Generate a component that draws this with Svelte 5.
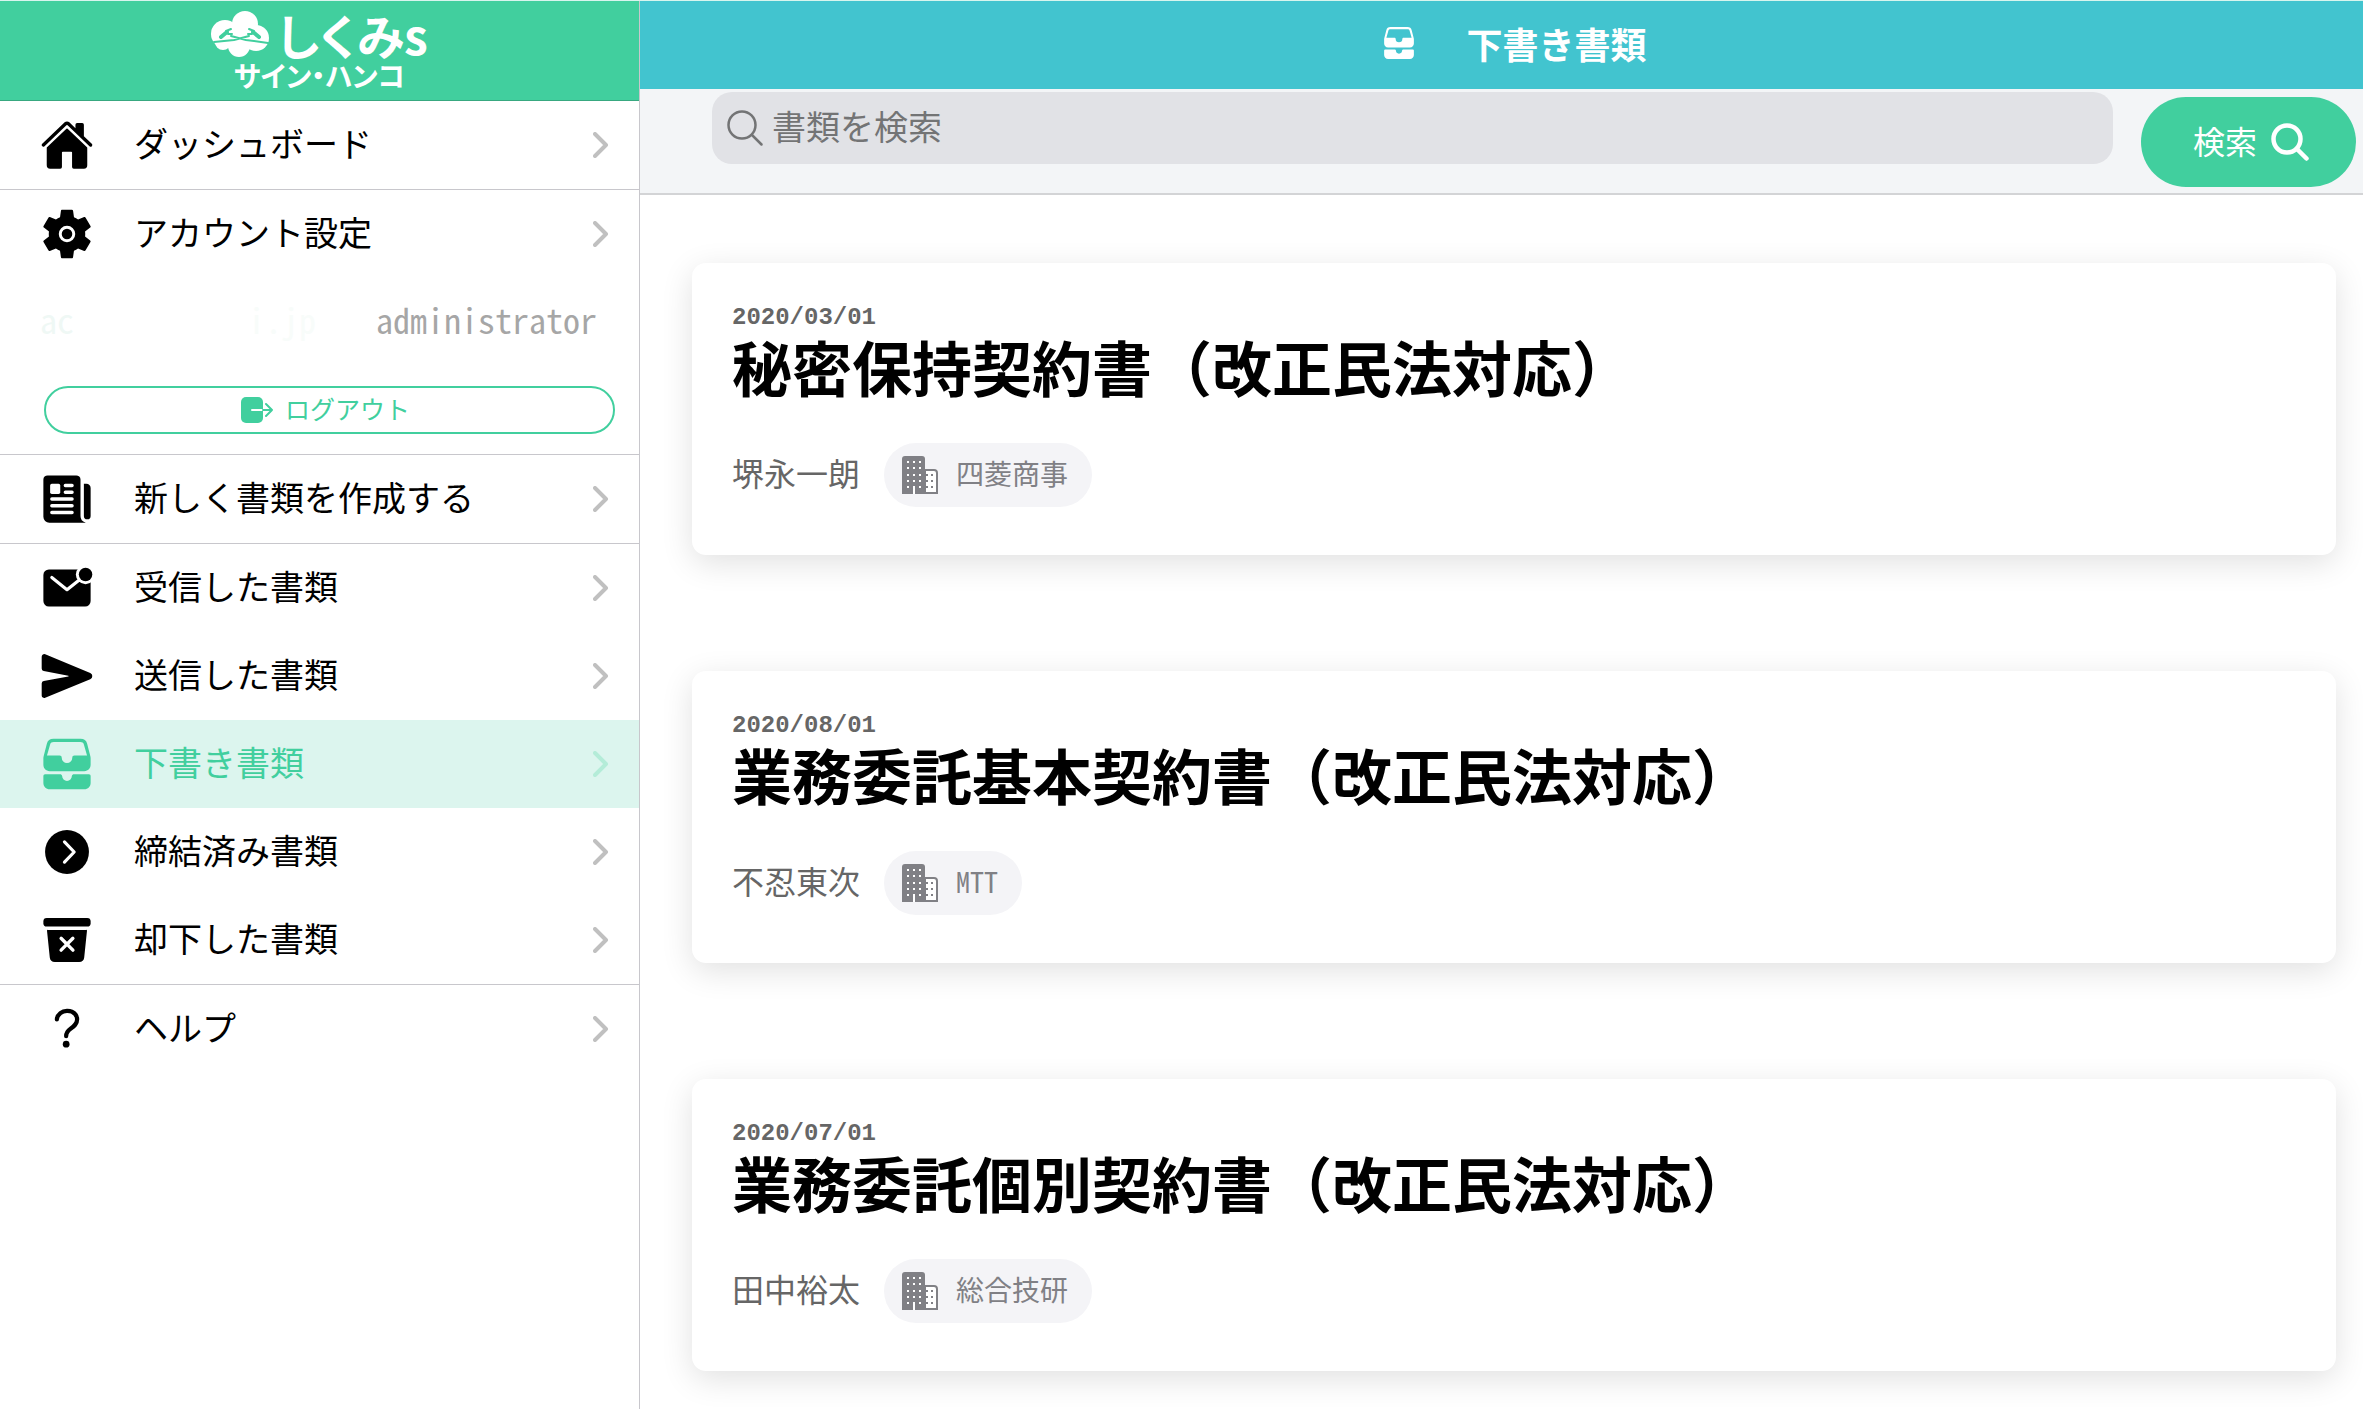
<script>
	const groups = [
		[{ icon: 'home', label: 'ダッシュボード' }],
		[{ icon: 'settings', label: 'アカウント設定', account: true }],
		[{ icon: 'newspaper', label: '新しく書類を作成する' }],
		[
			{ icon: 'mail', label: '受信した書類' },
			{ icon: 'send', label: '送信した書類' },
			{ icon: 'tray', label: '下書き書類', active: true },
			{ icon: 'forward', label: '締結済み書類' },
			{ icon: 'bin', label: '却下した書類' }
		],
		[{ icon: 'help', label: 'ヘルプ' }]
	];

	const documents = [
		{ date: '2020/03/01', title: '秘密保持契約書（改正民法対応）', name: '堺永一朗', company: '四菱商事' },
		{ date: '2020/08/01', title: '業務委託基本契約書（改正民法対応）', name: '不忍東次', company: 'MTT' },
		{ date: '2020/07/01', title: '業務委託個別契約書（改正民法対応）', name: '田中裕太', company: '総合技研' }
	];

	let keyword = $state('');
</script>

{#snippet icon(name)}
	<svg class="icon" viewBox="0 0 512 512" fill="currentColor" aria-hidden="true">
		{#if name === 'home'}
			<path d="M261.56 101.28a8 8 0 00-11.06 0L66.4 277.15a8 8 0 00-2.47 5.79L63.9 448a32 32 0 0032 32H192a16 16 0 0016-16V328a8 8 0 018-8h80a8 8 0 018 8v136a16 16 0 0016 16h96.06a32 32 0 0032-32V282.94a8 8 0 00-2.47-5.79z" />
			<path d="M490.91 244.15l-74.8-71.56V64a16 16 0 00-16-16h-48a16 16 0 00-16 16v32l-57.92-55.38C272.77 35.14 264.71 32 256 32c-8.68 0-16.72 3.14-22.14 8.63l-212.7 203.5c-6.22 6-7 15.87-1.34 22.37A16 16 0 0043 267.56L250.5 69.28a8 8 0 0111.06 0l207.52 198.28a16 16 0 0022.59-.44c6.14-6.36 5.63-16.86-.76-22.97z" />
		{:else if name === 'settings'}
			<path transform="translate(-32 -32) scale(24)" d="M19.14 12.94c.04-.3.06-.61.06-.94 0-.32-.02-.64-.07-.94l2.03-1.58a.49.49 0 00.12-.61l-1.92-3.32a.488.488 0 00-.59-.22l-2.39.96c-.5-.38-1.03-.7-1.62-.94l-.36-2.54a.484.484 0 00-.48-.41h-3.84c-.24 0-.43.17-.47.41l-.36 2.54c-.59.24-1.13.57-1.62.94l-2.39-.96c-.22-.08-.47 0-.59.22L2.74 8.87c-.12.21-.08.47.12.61l2.03 1.58c-.05.3-.09.63-.09.94s.02.64.07.94l-2.03 1.58a.49.49 0 00-.12.61l1.92 3.32c.12.22.37.29.59.22l2.39-.96c.5.38 1.03.7 1.62.94l.36 2.54c.05.24.24.41.48.41h3.84c.24 0 .44-.17.47-.41l.36-2.54c.59-.24 1.13-.56 1.62-.94l2.39.96c.22.08.47 0 .59-.22l1.92-3.32c.12-.22.07-.47-.12-.61l-2.01-1.58z" />
			<circle cx="256" cy="256" r="64" fill="none" stroke="#fff" stroke-width="28" />
		{:else if name === 'newspaper'}
			<path d="M439.91 112h-23.82a.09.09 0 00-.09.09V416a32 32 0 0064 0V152.09A40.09 40.09 0 00439.91 112z" />
			<path d="M384 416V72a40 40 0 00-40-40H72a40 40 0 00-40 40v352a56 56 0 0056 56h342.85a1.14 1.14 0 00.3-2.25A64.11 64.11 0 01384 416z" />
			<rect x="96" y="112" width="96" height="96" rx="16" fill="#fff" />
			<path d="M240 128h64M240 192h64M112 256h192M112 320h192M112 384h192" stroke="#fff" stroke-width="32" stroke-linecap="round" />
		{:else if name === 'mail'}
			<rect x="32" y="80" width="448" height="352" rx="52" />
			<path d="M112 156l144 116 110-88" fill="none" stroke="#fff" stroke-width="30" stroke-linecap="round" stroke-linejoin="round" />
			<circle cx="432" cy="128" r="92" fill="#fff" />
			<circle cx="432" cy="128" r="64" />
		{:else if name === 'send'}
			<path d="M476.59 227.05l-.16-.07L49.35 49.84A23.56 23.56 0 0027.14 52 24.65 24.65 0 0016 72.59v113.29a24 24 0 0019.52 23.57l232.93 43.07a4 4 0 010 7.86L35.53 303.45A24 24 0 0016 327v113.31A23.57 23.57 0 0026.59 460a23.94 23.94 0 0013.22 4 24.55 24.55 0 009.52-1.93L476.4 285.94l.19-.09a32 32 0 000-58.8z" />
		{:else if name === 'tray'}
			<path fill-rule="evenodd" d="M128 16h256c34 0 56 16 63 48l31 120q2 8 2 18v62c0 34-24 60-60 60H92c-36 0-60-26-60-60v-62q0-10 2-18L65 64c7-32 29-48 63-48zM130 48c-18 0-30 6-34 24L66 176h120c12 0 20 8 20 20a50 50 0 00100 0c0-12 8-20 20-20h120L416 72c-4-18-16-24-34-24z" />
			<path d="M48 352h140c12 0 20 6 22 18a46 46 0 0092 0c2-12 10-18 22-18h140q16 0 16 16v68c0 34-26 60-60 60H92c-34 0-60-26-60-60v-68q0-16 16-16z" />
		{:else if name === 'forward'}
			<circle cx="256" cy="256" r="208" />
			<path d="M232 160l92 96-92 96" fill="none" stroke="#fff" stroke-width="30" stroke-linecap="round" stroke-linejoin="round" />
		{:else if name === 'bin'}
			<rect x="32" y="48" width="448" height="80" rx="32" />
			<path d="M74.45 160a8 8 0 00-8 8.83l26.31 252.56a1.5 1.5 0 000 .22A48 48 0 00140.45 464h231.09a48 48 0 0047.67-42.39v-.21l26.27-252.57a8 8 0 00-8-8.83zm248.86 180.69a16 16 0 11-22.63 22.62L256 318.63l-44.69 44.68a16 16 0 01-22.63-22.62L233.37 296l-44.69-44.69a16 16 0 0122.63-22.62L256 273.37l44.68-44.68a16 16 0 0122.63 22.62L278.62 296z" />
		{:else if name === 'help'}
			<path d="M160 164s1.44-33 33.54-59.46C212.6 88.83 235.49 84.28 256 84c18.73-.23 35.47 2.94 45.48 7.82C318.59 100.2 352 120.6 352 164c0 45.67-29.18 66.37-62.35 89.18S248 298.36 248 324" fill="none" stroke="currentColor" stroke-width="40" stroke-linecap="round" />
			<circle cx="248" cy="400" r="32" />
		{/if}
	</svg>
{/snippet}

{#snippet magnifier(width)}
	<svg class="magnifier" viewBox="0 0 38 38" fill="none" stroke="currentColor" stroke-width={width} stroke-linecap="round" aria-hidden="true">
		<circle cx="16" cy="16" r="13.5" />
		<path d="M26 26l9.5 9.5" />
	</svg>
{/snippet}

<div class="page">
	<aside>
		<header class="brand">
			<div class="brand-row">
				<svg class="brand-mark" viewBox="0 0 58 46" aria-hidden="true">
					<g fill="#fff">
						<circle cx="34" cy="13" r="13" />
						<circle cx="14" cy="23" r="14" />
						<circle cx="12" cy="31" r="8" />
						<circle cx="45" cy="27" r="13" />
						<circle cx="28" cy="35" r="11" />
						<path d="M14 20h28v14H14z" />
					</g>
					<g fill="none" stroke="#41cf9e" stroke-linecap="round" stroke-linejoin="round">
						<path d="M3 31l20-2 15-4M57 32l-22-3-15-4" stroke-width="2" />
						<path d="M10 26l6-5M48 26l-6-5" stroke-width="4" />
						<path d="M15 20l5-2M17 23h4M43 20l-5-2M41 23h-4" stroke-width="2" />
					</g>
				</svg>
				<span class="brand-name">しくみs</span>
			</div>
			<span class="brand-sub">サイン・ハンコ</span>
		</header>

		<nav>
			{#each groups as group}
				<ul>
					{#each group as item}
						<li>
							<a href="#{item.icon}" class="item" class:active={item.active}>
								{@render icon(item.icon)}
								<span class="label">{item.label}</span>
								<svg class="chevron" viewBox="0 0 16 26" aria-hidden="true">
									<path d="M2 2l11 11L2 24" fill="none" stroke="currentColor" stroke-width="4" stroke-linecap="round" stroke-linejoin="round" />
								</svg>
							</a>
							{#if item.account}
								<div class="account">
									<span class="masked">ac</span>
									<span class="masked domain">i.jp</span>
									<span class="role">administrator</span>
								</div>
								<button type="button" class="logout">
									<svg viewBox="0 0 32 26" aria-hidden="true">
										<rect width="22" height="26" rx="5" fill="currentColor" />
										<path d="M11 13h11" stroke="#fff" stroke-width="2" stroke-linecap="round" />
										<path d="M22 13h9M25 7l6 6-6 6" fill="none" stroke="currentColor" stroke-width="2" stroke-linecap="round" stroke-linejoin="round" />
									</svg>
									<span>ログアウト</span>
								</button>
							{/if}
						</li>
					{/each}
				</ul>
			{/each}
		</nav>
	</aside>

	<main>
		<header class="title-bar">
			{@render icon('tray')}
			<h1>下書き書類</h1>
		</header>

		<form class="search" onsubmit={(e) => e.preventDefault()}>
			<label class="search-box">
				{@render magnifier(2.5)}
				<input type="search" placeholder="書類を検索" aria-label="書類を検索" bind:value={keyword} />
			</label>
			<button type="submit">
				<span>検索</span>
				{@render magnifier(4.5)}
			</button>
		</form>

		<div class="cards">
			{#each documents as doc}
				<article>
					<time>{doc.date}</time>
					<h2>{doc.title}</h2>
					<div class="person">
						<span class="name">{doc.name}</span>
						<div class="chip">
							<svg viewBox="0 0 36 38" aria-hidden="true">
								<path d="M3 0h17q3 0 3 3v35H0V3q0-3 3-3z" fill="currentColor" />
								<path d="M23 14h9q3 0 3 3v20H23z" fill="#fff" stroke="currentColor" stroke-width="2" />
								<path d="M5 6h14M5 12h14M5 19h14M5 25h14M5 31h14" stroke="#fff" stroke-width="2" stroke-dasharray="2 4" />
								<path d="M24 19h8M24 25h8M24 31h8" stroke="currentColor" stroke-width="2" stroke-dasharray="2 3" />
								<path d="M11 32h2v6h-2z" fill="#fff" />
							</svg>
							<span>{doc.company}</span>
						</div>
					</div>
				</article>
			{/each}
		</div>
	</main>
</div>

<style>
	:global(body) {
		margin: 0;
		background: #fff;
	}

	.page {
		display: flex;
		min-height: 100vh;
		box-sizing: border-box;
		border-top: 1px solid #d8f5ee;
		font-family: 'Noto Sans CJK JP', sans-serif;
		font-size: 34px;
		color: #000;
	}

	button,
	input {
		font-family: inherit;
	}

	aside {
		flex: 0 0 clamp(270px, 28%, 640px);
		box-sizing: border-box;
		border-right: 1px solid #c8c7cc;
	}

	.brand {
		display: flex;
		flex-direction: column;
		align-items: center;
		box-sizing: border-box;
		height: 100px;
		padding-top: 8px;
		background: #41cf9e;
		border-bottom: 1px solid #38a880;
		color: #fff;
		font-weight: 700;
		font-feature-settings: 'palt';
	}
	.brand-row {
		display: flex;
		align-items: center;
		gap: 8px;
	}
	.brand-mark {
		width: 58px;
		height: 46px;
	}
	.brand-name {
		font-size: 48px;
		line-height: 50px;
	}
	.brand-sub {
		font-size: 28px;
		line-height: 32px;
	}

	ul {
		margin: 0;
		padding: 0;
		list-style: none;
		border-bottom: 1px solid #c8c7cc;
	}
	ul:last-child {
		border-bottom: none;
	}

	.item {
		display: flex;
		align-items: center;
		height: 88px;
		padding: 0 30px 0 40px;
		color: inherit;
		text-decoration: none;
	}
	.item.active {
		background: #dcf5ee;
		color: #41cf9e;
	}
	.icon {
		width: 54px;
		height: 54px;
		flex: none;
	}
	.label {
		flex: 1;
		margin-left: 40px;
		padding-bottom: 4px;
		line-height: 44px;
	}
	.chevron {
		width: 16px;
		height: 26px;
		color: #c0c0c0;
	}
	.active .chevron {
		color: #b4ecd8;
	}

	.account {
		display: flex;
		padding: 0 42px 4px 40px;
		line-height: 84px;
		font-feature-settings: 'hwid';
	}
	.masked {
		color: #eff8f5;
	}
	.domain {
		margin-left: 174px;
		color: #f8fcfa;
	}
	.role {
		margin-left: auto;
		color: #a6a6a6;
	}

	.logout {
		display: flex;
		align-items: center;
		justify-content: center;
		gap: 12px;
		box-sizing: border-box;
		width: calc(100% - 68px);
		height: 48px;
		margin: 20px 24px 20px 44px;
		padding: 0 8px 0 0;
		background: none;
		border: 2px solid #41cf9e;
		border-radius: 24px;
		color: #41cf9e;
		font-size: 25px;
	}
	.logout svg {
		width: 32px;
		height: 26px;
	}
	.logout span {
		padding-bottom: 4px;
	}

	main {
		flex: 1;
		min-width: 0;
	}

	.title-bar {
		display: flex;
		align-items: center;
		justify-content: center;
		gap: 50px;
		box-sizing: border-box;
		height: 88px;
		padding: 0 0 4px 26px;
		background: #42c4cf;
		color: #fff;
	}
	.title-bar .icon {
		width: 34px;
		height: 34px;
	}
	h1 {
		margin: 0;
		font-size: 36px;
		line-height: 44px;
	}

	.search {
		display: flex;
		align-items: flex-start;
		gap: 28px;
		padding: 3px 7px 6px 72px;
		background: #f3f5f7;
		border-bottom: 2px solid #d3d4d6;
	}
	.search-box {
		display: flex;
		flex: 1;
		align-items: center;
		gap: 8px;
		height: 72px;
		padding: 0 14px;
		background: #e1e2e6;
		border-radius: 20px;
		color: #737475;
	}
	.search-box input {
		flex: 1;
		min-width: 0;
		padding: 0 0 6px;
		background: none;
		border: none;
		outline: none;
		color: inherit;
		font-size: 34px;
	}
	.search-box input::placeholder {
		color: inherit;
		opacity: 1;
	}
	.magnifier {
		width: 38px;
		height: 38px;
		flex: none;
	}
	.search button {
		display: flex;
		align-items: center;
		gap: 14px;
		height: 90px;
		margin-top: 5px;
		padding: 0 47px 0 52px;
		background: #41cf9e;
		border: none;
		border-radius: 45px;
		color: #fff;
		font-size: 32px;
	}
	.search button span {
		padding-bottom: 4px;
	}

	.cards {
		display: flex;
		flex-direction: column;
		gap: 116px;
		padding: 68px 27px 38px 52px;
	}
	article {
		padding: 38px 40px 48px;
		background: #fff;
		border-radius: 14px;
		box-shadow: 0 8px 32px rgba(0, 0, 0, 0.12);
	}
	time {
		display: block;
		color: #666;
		font-family: 'Liberation Mono', monospace;
		font-size: 24px;
		font-weight: 700;
		line-height: 34px;
	}
	h2 {
		margin: 0;
		font-size: 60px;
		line-height: 62px;
	}
	.person {
		display: flex;
		align-items: center;
		gap: 24px;
		margin-top: 46px;
		color: #666;
		font-size: 32px;
		line-height: 44px;
	}
	.name {
		padding-bottom: 6px;
	}
	.chip {
		display: flex;
		align-items: center;
		gap: 18px;
		height: 64px;
		padding: 0 24px 0 18px;
		background: #f4f4f7;
		border-radius: 32px;
		color: #808085;
		font-size: 28px;
		font-feature-settings: 'hwid';
	}
	.chip span {
		padding-bottom: 4px;
	}
	.chip svg {
		width: 36px;
		height: 38px;
	}
</style>
